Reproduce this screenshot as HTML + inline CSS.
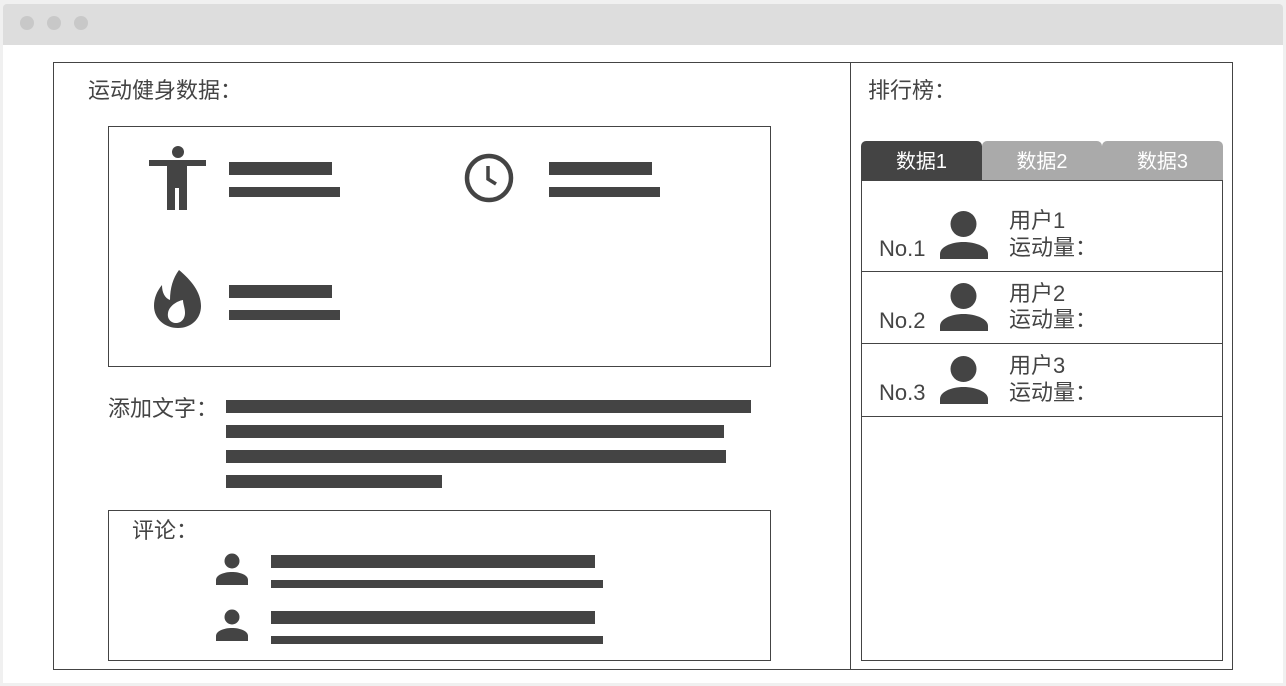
<!DOCTYPE html>
<html><head><meta charset="utf-8"><style>
body{margin:0;width:1286px;height:686px;background:#f0f0f0;position:relative;overflow:hidden;font-family:"Liberation Sans","Noto Sans CJK SC",sans-serif;color:#444}
div{position:absolute;box-sizing:border-box}
.b{background:#444}
.t{font-size:22px;white-space:nowrap;line-height:1}
.dot{width:14px;height:14px;border-radius:50%;background:#c8c8c8;top:16px}
.tab{top:141px;height:40px;border-radius:5px 5px 0 0;color:#fff;font-size:20px;text-align:center;line-height:42px}
</style></head><body>
<div style="left:3px;top:4px;width:1280px;height:41px;background:#dddddd;border-radius:4px 4px 0 0"></div>
<div class="dot" style="left:20px"></div><div class="dot" style="left:47px"></div><div class="dot" style="left:74px"></div>
<div style="left:3px;top:45px;width:1280px;height:638px;background:#fff"></div>
<div style="left:53px;top:62px;width:1180px;height:608px;border:1px solid #444"></div>
<div style="left:850px;top:62px;width:1px;height:608px;background:#444"></div>
<div class="t" style="left:88px;top:80px">运动健身数据：</div>
<div class="t" style="left:868px;top:80px">排行榜：</div>
<div style="left:108px;top:126px;width:663px;height:241px;border:1px solid #444"></div>
<svg style="position:absolute;left:148px;top:145px" width="60" height="66" viewBox="0 0 60 66"><circle cx="30" cy="7" r="6" fill="#444"/><rect x="1" y="15" width="57" height="6" fill="#444"/><rect x="19" y="15" width="20" height="28" fill="#444"/><rect x="19" y="40" width="8" height="25" fill="#444"/><rect x="31" y="40" width="8" height="25" fill="#444"/></svg>
<svg style="position:absolute;left:463px;top:152px" width="52" height="52" viewBox="0 0 52 52"><circle cx="26" cy="26" r="22" fill="none" stroke="#444" stroke-width="4.5"/><path d="M25 14V27L33 32" fill="none" stroke="#444" stroke-width="3.5"/></svg>
<svg style="position:absolute;left:153px;top:268px" width="50" height="62" viewBox="0 0 50 62"><path d="M26 2C38 12 48 24 48 38 48 51 38 60 25 60 12 60 1 51 1 38 1 30 4 23 9 17 9 25 12 30 17 32 17 20 20 10 26 2Z M30 32C24 33 16 38 15 45 14 51 18 55 23 55 29 55 32 50 32 45 32 40 30 36 30 32Z" fill="#444" fill-rule="evenodd"/></svg>
<div class="b" style="left:229px;top:162px;width:103px;height:13px"></div>
<div class="b" style="left:229px;top:187px;width:111px;height:10px"></div>
<div class="b" style="left:549px;top:162px;width:103px;height:13px"></div>
<div class="b" style="left:549px;top:187px;width:111px;height:10px"></div>
<div class="b" style="left:229px;top:285px;width:103px;height:13px"></div>
<div class="b" style="left:229px;top:310px;width:111px;height:10px"></div>
<div class="t" style="left:108px;top:398px">添加文字：</div>
<div class="b" style="left:226px;top:400px;width:525px;height:13px"></div>
<div class="b" style="left:226px;top:425px;width:498px;height:13px"></div>
<div class="b" style="left:226px;top:450px;width:500px;height:13px"></div>
<div class="b" style="left:226px;top:475px;width:216px;height:13px"></div>
<div style="left:108px;top:510px;width:663px;height:151px;border:1px solid #444"></div>
<div class="t" style="left:132px;top:520px">评论：</div>
<svg style="position:absolute;left:215px;top:553px" width="34" height="32" viewBox="0 0 34 32"><circle cx="17" cy="8" r="7.5" fill="#444"/><path d="M1 32V27C1 22 9 19 17 19 25 19 33 22 33 27V32Z" fill="#444"/></svg>
<svg style="position:absolute;left:215px;top:609px" width="34" height="32" viewBox="0 0 34 32"><circle cx="17" cy="8" r="7.5" fill="#444"/><path d="M1 32V27C1 22 9 19 17 19 25 19 33 22 33 27V32Z" fill="#444"/></svg>
<div class="b" style="left:271px;top:555px;width:324px;height:13px"></div>
<div class="b" style="left:271px;top:580px;width:332px;height:8px"></div>
<div class="b" style="left:271px;top:611px;width:324px;height:13px"></div>
<div class="b" style="left:271px;top:636px;width:332px;height:8px"></div>
<div class="tab" style="left:861px;width:121px;background:#444">数据1</div>
<div class="tab" style="left:982px;width:120px;background:#aaa">数据2</div>
<div class="tab" style="left:1102px;width:121px;background:#aaa">数据3</div>
<div style="left:861px;top:180px;width:362px;height:481px;border:1px solid #444"></div>
<div class="b" style="left:861px;top:271px;width:362px;height:1px"></div>
<div class="b" style="left:861px;top:343px;width:362px;height:1px"></div>
<div class="b" style="left:861px;top:416px;width:362px;height:1px"></div>
<svg style="position:absolute;left:939px;top:210px" width="50" height="49" viewBox="0 0 50 49"><circle cx="24.5" cy="14" r="13" fill="#444"/><path d="M1 49V44C1 37 12 32 24.5 32 37 32 49 37 49 44V49Z" fill="#444"/></svg>
<svg style="position:absolute;left:939px;top:282px" width="50" height="49" viewBox="0 0 50 49"><circle cx="24.5" cy="14" r="13" fill="#444"/><path d="M1 49V44C1 37 12 32 24.5 32 37 32 49 37 49 44V49Z" fill="#444"/></svg>
<svg style="position:absolute;left:939px;top:355px" width="50" height="49" viewBox="0 0 50 49"><circle cx="24.5" cy="14" r="13" fill="#444"/><path d="M1 49V44C1 37 12 32 24.5 32 37 32 49 37 49 44V49Z" fill="#444"/></svg>
<div class="t" style="left:879px;top:238px">No.1</div>
<div class="t" style="left:1009px;top:210px">用户1</div>
<div class="t" style="left:1009px;top:237px">运动量：</div>
<div class="t" style="left:879px;top:310px">No.2</div>
<div class="t" style="left:1009px;top:283px">用户2</div>
<div class="t" style="left:1009px;top:309px">运动量：</div>
<div class="t" style="left:879px;top:382px">No.3</div>
<div class="t" style="left:1009px;top:355px">用户3</div>
<div class="t" style="left:1009px;top:382px">运动量：</div>
</body></html>
